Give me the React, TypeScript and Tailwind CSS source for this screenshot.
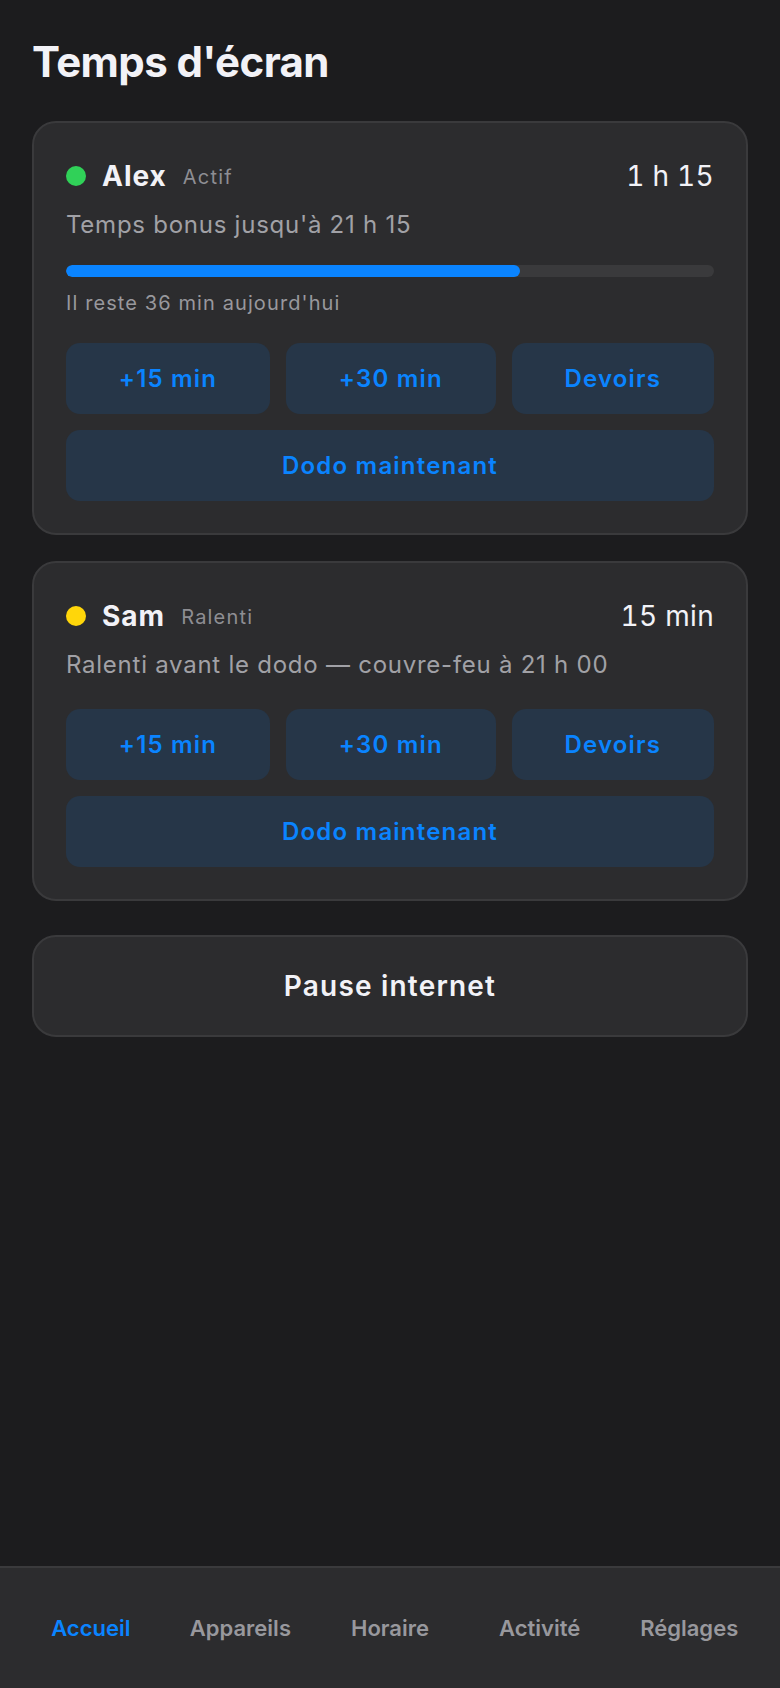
import React from 'react';

interface Kid {
  name: string;
  status: string;
  dot: string;
  time: string;
  note: string;
  progress?: number;
  remaining?: string;
}

const kids: Kid[] = [
  {
    name: 'Alex',
    status: 'Actif',
    dot: 'bg-[#30d158]',
    time: '1 h 15',
    note: "Temps bonus jusqu'à 21 h 15",
    progress: 70,
    remaining: "Il reste 36 min aujourd'hui",
  },
  {
    name: 'Sam',
    status: 'Ralenti',
    dot: 'bg-[#ffd60a]',
    time: '15 min',
    note: 'Ralenti avant le dodo — couvre-feu à 21 h 00',
  },
];

const tabs = ['Accueil', 'Appareils', 'Horaire', 'Activité', 'Réglages'];

const ActionButton: React.FC<{ label: string; grow?: boolean }> = ({ label, grow }) => (
  <button
    className={`h-[71px] px-6 rounded-[14px] bg-[#263648] text-[#0a84ff] text-[24px] font-semibold leading-[28px] tracking-[1.2px] ${
      grow ? 'flex-auto' : 'w-full'
    }`}
  >
    {label}
  </button>
);

const KidCard: React.FC<{ kid: Kid }> = ({ kid }) => (
  <div className="rounded-[24px] border-2 border-[#3a3a3c] bg-[#2c2c2e] p-8">
    <div className="flex items-center justify-between h-[42px]">
      <div className="flex items-center gap-4">
        <div className={`w-5 h-5 rounded-full ${kid.dot}`} />
        <span className="text-[28px] leading-[42px] font-bold tracking-[1px] text-[#f2f2f7]">{kid.name}</span>
        <span className="text-[20px] leading-[42px] tracking-[1.2px] text-[#8e8e93] mt-[2px]">{kid.status}</span>
      </div>
      <span className="text-[28px] leading-[42px] tabular-nums tracking-[0.3px] text-[#f2f2f7]">{kid.time}</span>
    </div>

    <p className="mt-3 text-[24px] leading-[32px] tracking-[0.75px] text-[#a1a1a6]">{kid.note}</p>

    {kid.progress !== undefined && (
      <>
        <div className="mt-6 h-3 rounded-full bg-[#3a3a3c] overflow-hidden">
          <div className="h-full rounded-full bg-[#0a84ff]" style={{ width: `${kid.progress}%` }} />
        </div>
        <p className="mt-3.5 text-[20px] leading-[24px] tracking-[1.1px] text-[#98989d]">{kid.remaining}</p>
      </>
    )}

    <div className="mt-7 flex flex-col gap-4">
      <div className="flex gap-4">
        <ActionButton label="+15 min" grow />
        <ActionButton label="+30 min" grow />
        <ActionButton label="Devoirs" grow />
      </div>
      <ActionButton label="Dodo maintenant" />
    </div>
  </div>
);

export default function App() {
  return (
    <div className="h-[1688px] flex flex-col bg-[#1c1c1e] font-['Inter',sans-serif]">
      <main className="flex-1 px-8 pt-9">
        <h1 className="text-[42px] leading-[52px] font-bold tracking-[-0.6px] text-[#f2f2f7]">Temps d'écran</h1>

        <div className="mt-[33px] flex flex-col gap-[26px]">
          {kids.map((k) => (
            <KidCard key={k.name} kid={k} />
          ))}
        </div>

        <button className="mt-[34px] w-full h-[102px] rounded-[24px] border-2 border-[#3a3a3c] bg-[#2c2c2e] text-[28px] font-semibold tracking-[1.2px] text-[#f2f2f7]">
          Pause internet
        </button>
      </main>

      <nav className="border-t-2 border-[#3a3a3c] bg-[#2c2c2e] px-4 pt-[46px] pb-[46px] grid grid-cols-5">
        {tabs.map((t, i) => (
          <span
            key={t}
            className={`text-center text-[22px] leading-[28px] font-semibold ${
              i === 0 ? 'text-[#0a84ff]' : 'text-[#98989d]'
            }`}
          >
            {t}
          </span>
        ))}
      </nav>
    </div>
  );
}
